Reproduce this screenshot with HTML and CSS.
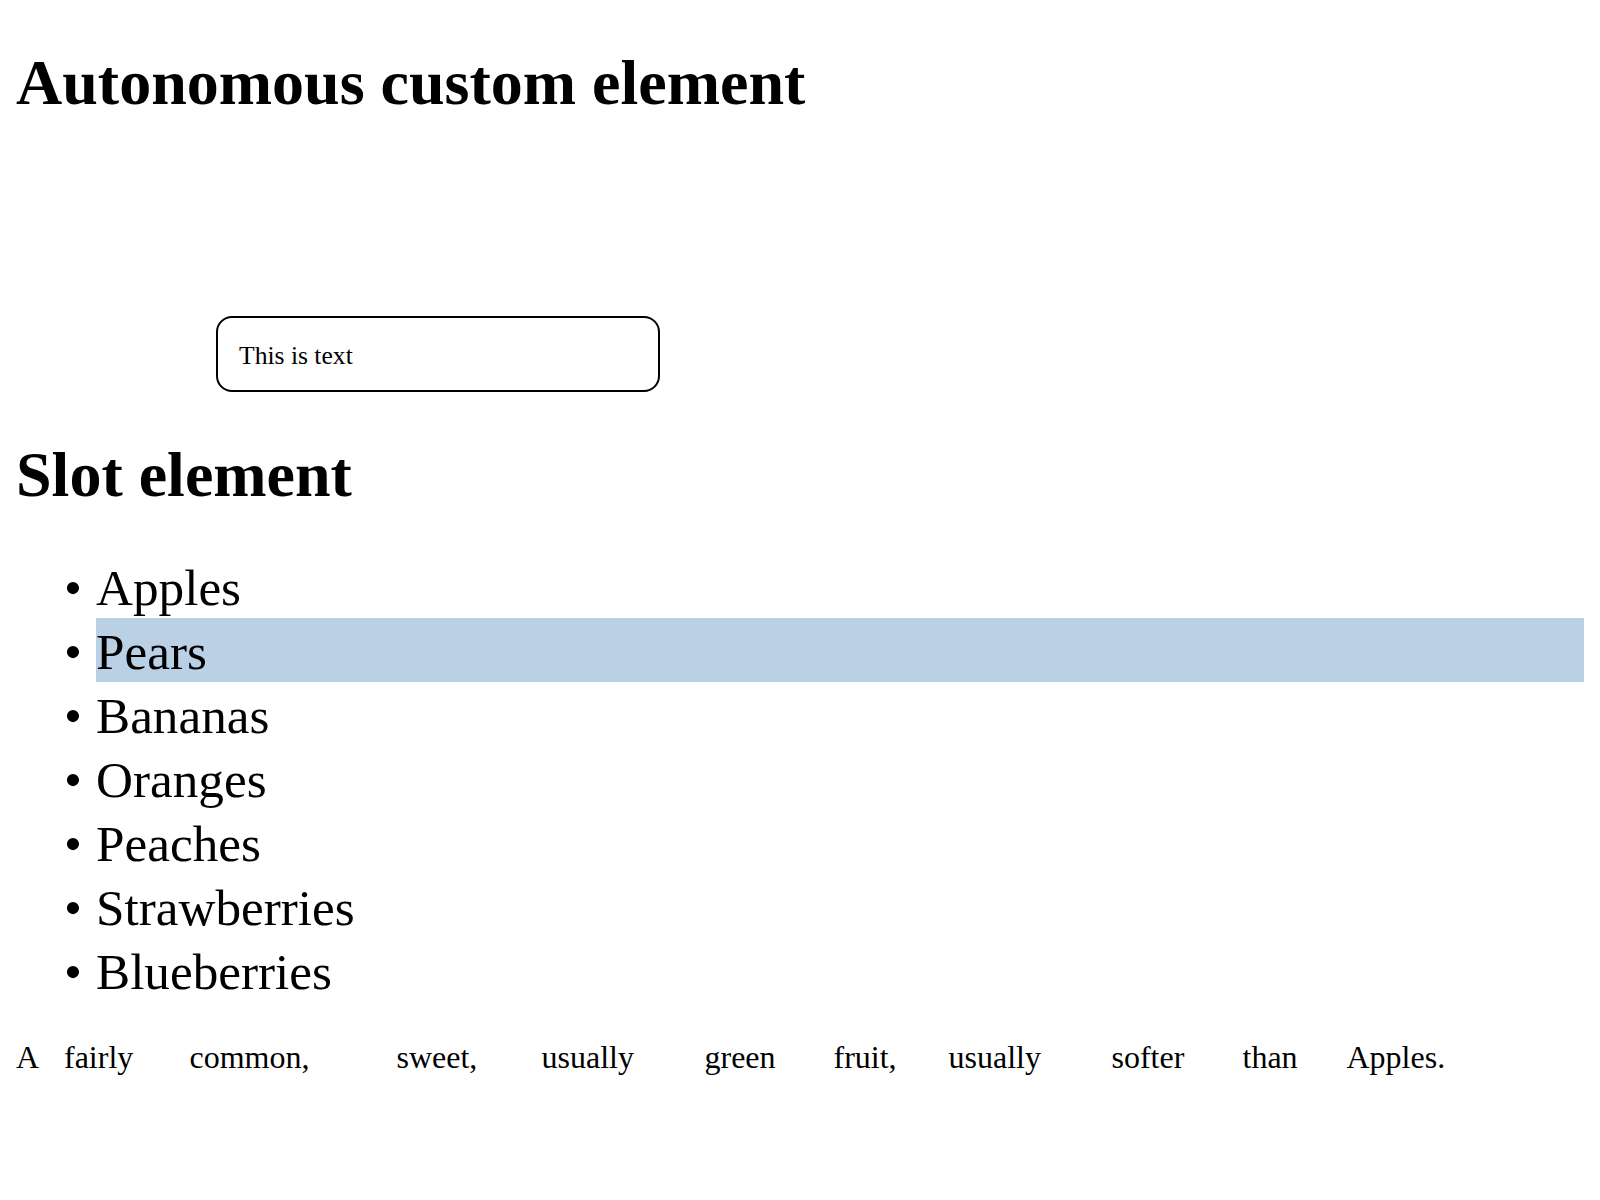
FILE: index.html
```html
<!DOCTYPE html>
<html lang="en">
<head>
<meta charset="utf-8">
<title>Custom elements</title>
<link rel="stylesheet" href="styles.css">
</head>
<body>
<h1 class="title title-first">Autonomous custom element</h1>
<div class="demo">
  <div class="text-box">This is text</div>
</div>
<h1 class="title title-second">Slot element</h1>
<ul class="fruits">
  <li>Apples</li>
  <li class="selected">Pears</li>
  <li>Bananas</li>
  <li>Oranges</li>
  <li>Peaches</li>
  <li>Strawberries</li>
  <li>Blueberries</li>
</ul>
<p class="desc"><span>A</span><span>fairly</span><span>common,</span><span>sweet,</span><span>usually</span><span>green</span><span>fruit,</span><span>usually</span><span>softer</span><span>than</span><span>Apples.</span></p>
</body>
</html>
```
FILE: styles.css
```css
html, body {
  background: #ffffff;
}
body {
  margin: 0;
  padding: 16px;
  font-family: "Liberation Serif", "Times New Roman", serif;
  color: #000000;
}
.title {
  font-size: 64px;
  font-weight: bold;
  line-height: 74px;
  margin: 0;
}
.title-first {
  margin-top: 30px;
}
.demo {
  padding: 196px 0 0 200px;
}
.text-box {
  box-sizing: border-box;
  width: 444px;
  height: 76px;
  border: 2px solid #000000;
  border-radius: 16px;
  padding: 23px 20px 0 21px;
  font-size: 25.6px;
  line-height: 29.4px;
}
.title-second {
  margin-top: 46px;
}
.fruits {
  margin: 42px 0 0 0;
  padding: 0 0 0 80px;
  font-size: 51.2px;
  list-style: none;
}
.fruits li {
  box-sizing: border-box;
  height: 64px;
  padding-top: 3px;
  line-height: 61px;
}
.fruits li::before {
  content: "\2022";
  display: inline-block;
  width: 32px;
  margin-left: -32px;
}
.fruits li.selected {
  background: #bad0e5;
}
.desc {
  margin: 37px 0 0 0;
  font-size: 32px;
  line-height: 36.8px;
  white-space: nowrap;
  display: flex;
}
.desc span:nth-child(1) { width: 48px; }
.desc span:nth-child(2) { width: 125.5px; }
.desc span:nth-child(3) { width: 207px; }
.desc span:nth-child(4) { width: 145px; }
.desc span:nth-child(5) { width: 163px; }
.desc span:nth-child(6) { width: 129px; }
.desc span:nth-child(7) { width: 115px; }
.desc span:nth-child(8) { width: 163px; }
.desc span:nth-child(9) { width: 131px; }
.desc span:nth-child(10) { width: 104px; }
```
